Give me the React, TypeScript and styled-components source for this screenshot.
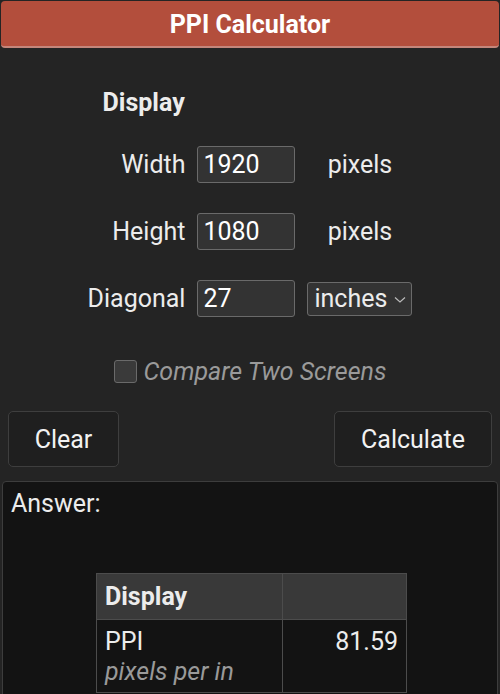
import React from 'react';
import styled, { createGlobalStyle } from 'styled-components';

const GlobalStyle = createGlobalStyle`
  html, body {
    margin: 0;
    padding: 0;
    background: #242424;
    font-family: Roboto, "Liberation Sans", sans-serif;
    color: #ececec;
  }
`;

const Page = styled.div`
  width: 500px;
  height: 694px;
  overflow: hidden;
  background: #242424;
  padding-top: 1px;
  box-sizing: border-box;
`;

const TitleBar = styled.h1`
  margin: 0 1px;
  height: 47px;
  padding-top: 2px;
  background: #b34e3c;
  border-bottom: 2px solid #c4867b;
  border-radius: 4px;
  box-sizing: border-box;
  display: flex;
  align-items: center;
  justify-content: center;
  font-size: 25px;
  font-weight: 700;
  color: #fff;
`;

const FormWrap = styled.div`
  display: flex;
  flex-direction: column;
  align-items: center;
  padding-top: 41px;
`;

const Section = styled.div`
  display: flex;
  flex-direction: column;
`;

const SectionTitle = styled.div`
  font-size: 25px;
  font-weight: 700;
  margin-left: 15px;
  line-height: 28px;
  margin-bottom: 29px;
`;

const FieldGrid = styled.div`
  display: grid;
  grid-template-columns: auto 98px 105px;
  column-gap: 12px;
  row-gap: 30px;
  align-items: center;
`;

const Label = styled.label`
  font-size: 25px;
  text-align: right;
`;

const NumberInput = styled.input`
  width: 98px;
  height: 37px;
  box-sizing: border-box;
  background: #333333;
  border: 1px solid #6a6a6a;
  border-radius: 3px;
  color: #fff;
  font-family: inherit;
  font-size: 25px;
  padding: 0 5px;
  outline: none;
`;

const Unit = styled.span`
  font-size: 25px;
  text-align: center;
`;

const SelectBox = styled.div`
  position: relative;
  height: 34px;
  box-sizing: border-box;
  background: #333333;
  border: 1px solid #6a6a6a;
  border-radius: 3px;
  display: flex;
  align-items: center;
  padding-left: 6px;
  font-size: 25px;
`;

const Chevron = styled.svg`
  position: absolute;
  right: 5px;
  top: 13px;
`;

const CheckRow = styled.label`
  display: flex;
  align-items: center;
  gap: 7px;
  margin-top: 40px;
  color: #9a9a9a;
  font-size: 25px;
  font-style: italic;
`;

const CheckBox = styled.span`
  width: 23px;
  height: 23px;
  box-sizing: border-box;
  background: #3a3a3a;
  border: 1px solid #6a6a6a;
  border-radius: 3px;
`;

const ButtonRow = styled.div`
  display: flex;
  justify-content: space-between;
  padding: 0 8px;
  margin-top: 25px;
`;

const Button = styled.button<{ $width: number }>`
  width: ${(p) => p.$width}px;
  height: 56px;
  background: #1f1f1f;
  border: 1px solid #3e3e3e;
  border-radius: 5px;
  color: #f2f2f2;
  font-family: inherit;
  font-size: 25px;
`;

const AnswerBox = styled.div`
  margin: 14px 2px 0;
  height: 260px;
  background: #131313;
  border: 1px solid #3d3d3d;
  border-radius: 4px;
  padding: 7px 8px;
`;

const AnswerLabel = styled.div`
  font-size: 25px;
  line-height: 30px;
`;

const ResultTable = styled.table`
  margin: 54px 0 0 85px;
  width: 311px;
  border-collapse: collapse;
  font-size: 25px;
`;

const HeadCell = styled.th`
  background: #393939;
  border: 1px solid #4c4c4c;
  height: 46px;
  padding: 0 8px;
  text-align: left;
  font-weight: 700;
  box-sizing: border-box;
`;

const Cell = styled.td<{ $right?: boolean }>`
  border: 1px solid #4c4c4c;
  padding: 7px 8px 5px;
  vertical-align: top;
  text-align: ${(p) => (p.$right ? 'right' : 'left')};
  line-height: 30px;
`;

const SubNote = styled.div`
  font-style: italic;
  color: #9a9a9a;
`;

const App: React.FC = () => {
  return (
    <Page>
      <GlobalStyle />
      <TitleBar>PPI Calculator</TitleBar>
      <FormWrap>
        <Section>
          <SectionTitle>Display</SectionTitle>
          <FieldGrid>
            <Label>Width</Label>
            <NumberInput defaultValue="1920" />
            <Unit>pixels</Unit>
            <Label>Height</Label>
            <NumberInput defaultValue="1080" />
            <Unit>pixels</Unit>
            <Label>Diagonal</Label>
            <NumberInput defaultValue="27" />
            <SelectBox>
              inches
              <Chevron width="12" height="8" viewBox="0 0 12 8">
                <path d="M1 1.5 L6 6 L11 1.5" fill="none" stroke="#bbb" strokeWidth="1.2" />
              </Chevron>
            </SelectBox>
          </FieldGrid>
        </Section>
        <CheckRow>
          <CheckBox />
          Compare Two Screens
        </CheckRow>
      </FormWrap>
      <ButtonRow>
        <Button $width={111}>Clear</Button>
        <Button $width={158}>Calculate</Button>
      </ButtonRow>
      <AnswerBox>
        <AnswerLabel>Answer:</AnswerLabel>
        <ResultTable>
          <colgroup>
            <col style={{ width: '186px' }} />
            <col />
          </colgroup>
          <thead>
            <tr>
              <HeadCell>Display</HeadCell>
              <HeadCell />
            </tr>
          </thead>
          <tbody>
            <tr>
              <Cell>
                PPI
                <SubNote>pixels per in</SubNote>
              </Cell>
              <Cell $right>81.59</Cell>
            </tr>
          </tbody>
        </ResultTable>
      </AnswerBox>
    </Page>
  );
};

export default App;
